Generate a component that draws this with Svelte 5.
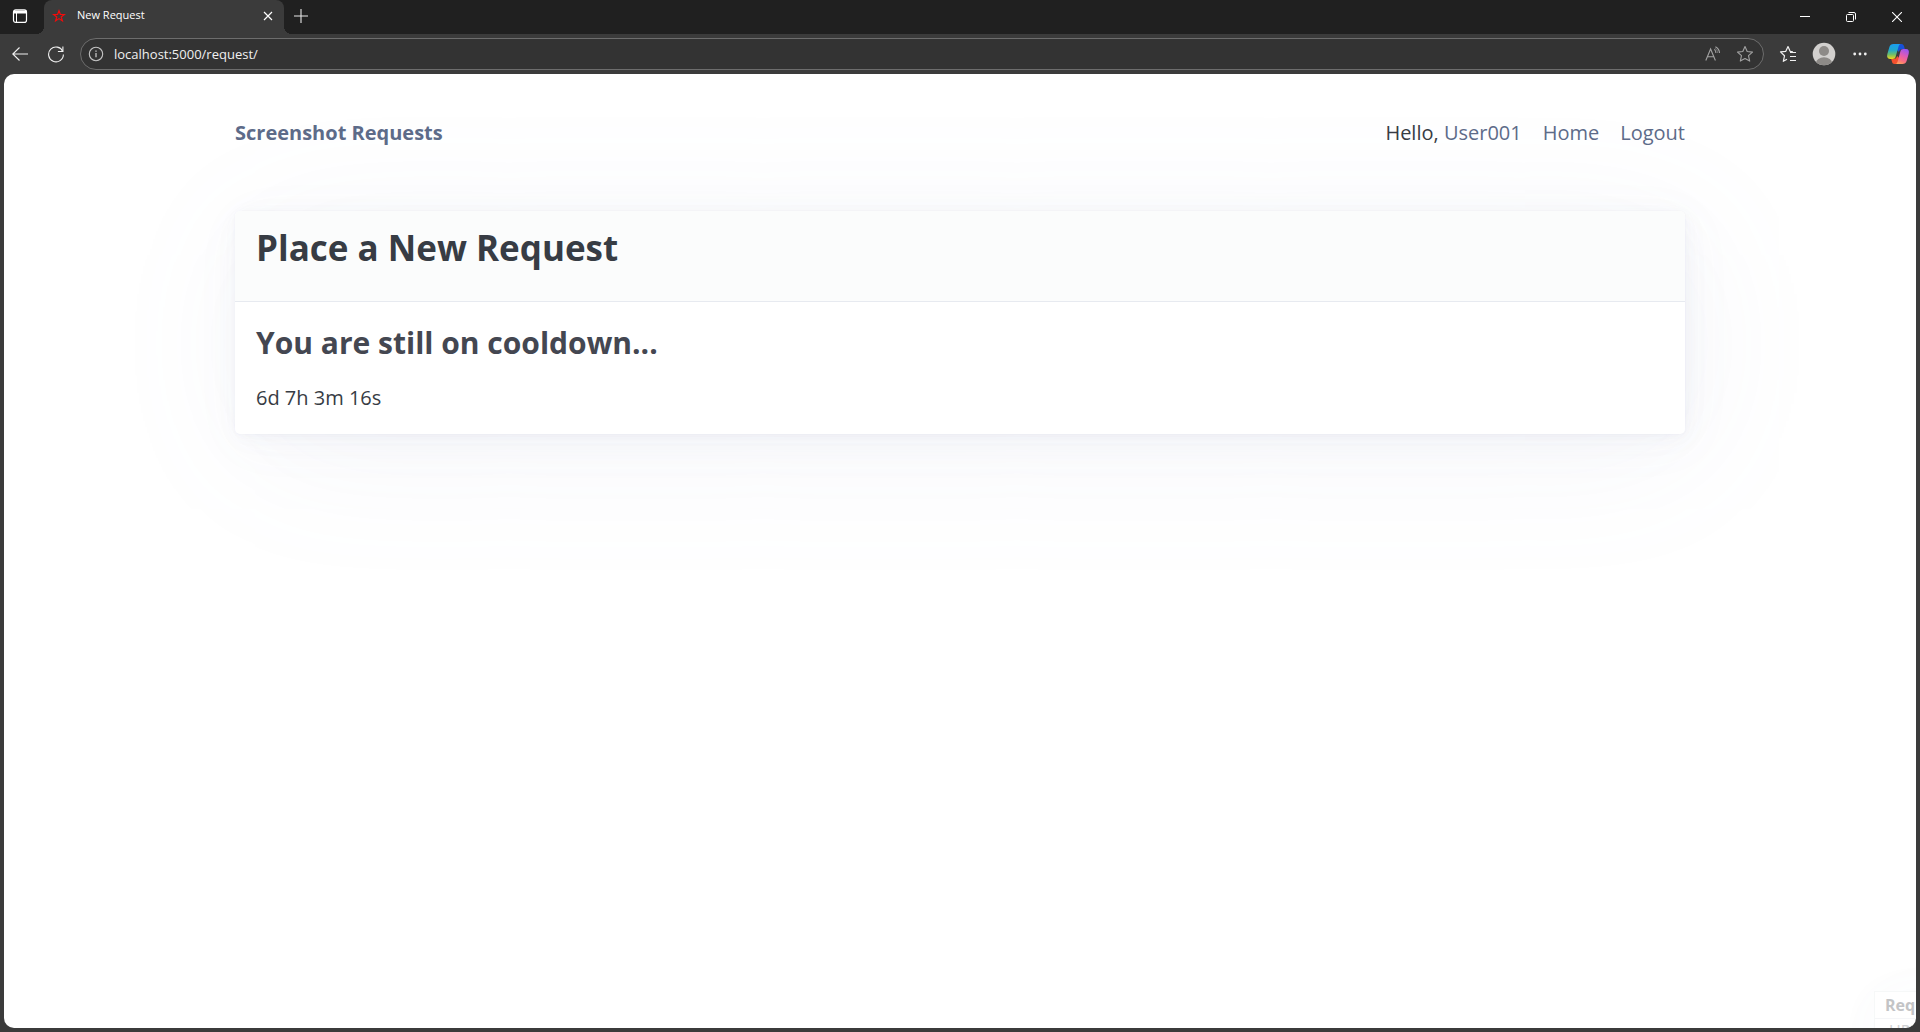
<script>
  let address = $state('localhost:5000/request/');
  const user = 'User001';
  const remaining = '6d 7h 3m 16s';
</script>

<div class="window">
  <header class="tabstrip">
    <button class="workspace" aria-label="Tab actions">
      <svg width="16" height="16" viewBox="0 0 16 16" fill="none" stroke="#fff">
        <rect x="1.5" y="1.8" width="13" height="12.6" rx="2.2" stroke-width="1.2" />
        <path d="M2 3h12v2H2z" fill="#fff" />
        <path d="M4.5 5v9" stroke-width="1" />
      </svg>
    </button>
    <div class="tab">
      <svg class="favicon" width="14" height="14" viewBox="0 0 14 14" fill="none" stroke="#f40b0b" stroke-width="1.2">
        <path d="M7 1.8l1.4 3.7h4L9.2 7.9l1.2 4L7 9.6l-3.4 2.3 1.2-4L1.6 5.500h4z" />
      </svg>
      <span class="tab-title">New Request</span>
      <button aria-label="Close tab">
        <svg width="10" height="10" viewBox="0 0 10 10" stroke="#fff" stroke-width="1.2"><path d="M1 1l8 8M9 1l-8 8" /></svg>
      </button>
    </div>
    <button class="new-tab" aria-label="New tab">
      <svg width="14" height="14" viewBox="0 0 14 14" stroke="#e8e8e8" stroke-width="1.1"><path d="M7 0v14M0 7h14" /></svg>
    </button>
    <div class="controls">
      <button aria-label="Minimize">
        <svg width="10" height="10" viewBox="0 0 10 10" stroke="#fff"><path d="M0 4.500h10" /></svg>
      </button>
      <button aria-label="Restore">
        <svg width="10" height="10" viewBox="0 0 10 10" fill="none" stroke="#fff">
          <rect x=".5" y="2.5" width="7" height="7" rx="1" />
          <path d="M2.500 .5H8a1.500 1.500 0 0 1 1.500 1.500V7.500" />
        </svg>
      </button>
      <button aria-label="Close">
        <svg width="10" height="10" viewBox="0 0 10 10" stroke="#fff" stroke-width="1.1"><path d="M0 0l10 10M10 0L0 10" /></svg>
      </button>
    </div>
  </header>

  <div class="toolbar">
    <button class="back" aria-label="Back">
      <svg width="16" height="14" viewBox="0 0 16 14" fill="none" stroke="#f0f0f0" stroke-width="1.1"><path d="M16 7H.8M7.500 .5L.8 7l6.700 6.500" /></svg>
    </button>
    <button class="reload" aria-label="Refresh">
      <svg width="18" height="18" viewBox="0 0 18 18" fill="none" stroke="#f0f0f0" stroke-width="1.100">
        <path d="M15.800 6.500A7.400 7.400 0 1 0 16.400 9.500" />
        <path d="M15.900 1.500v5h-5" />
      </svg>
    </button>
    <div class="address">
      <svg width="16" height="16" viewBox="0 0 16 16" fill="none" stroke="#c4c4c4" stroke-width="1.1">
        <circle cx="8" cy="8" r="6.700" />
        <path d="M8 7v4.200" stroke-width="1.3" /><path d="M8 4.500v1.300" stroke-width="1.400" />
      </svg>
      <input aria-label="Address" bind:value={address} />
      <button aria-label="Read aloud">
        <svg width="16" height="16" viewBox="0 0 16 16" fill="none" stroke="#a2a2a2" stroke-width="1.1">
          <path d="M.8 14.500L5.600 3l4.800 11.500M2.400 10.700h6.400" />
          <path d="M9.300 3.400c1 .7 1.600 1.900 1.600 3.600M10.400 .8c2.500 1.300 4 3.500 4.100 6.200" />
          <path d="M9.900 2.100c1.700 1 2.700 2.700 2.800 4.900" stroke-opacity=".5" />
        </svg>
      </button>
      <button aria-label="Add to favorites">
        <svg width="18" height="18" viewBox="0 0 18 18" fill="none" stroke="#a2a2a2" stroke-width="1.100" stroke-linejoin="round">
          <path d="M9 1.600l2.200 4.900 5.300.6-4 3.600 1.200 5.400L9 13.500l-4.700 2.600 1.200-5.400-4-3.600 5.300-.6z" />
        </svg>
      </button>
    </div>
    <button class="favorites" aria-label="Favorites">
      <svg width="18" height="18" viewBox="0 0 18 18" fill="none" stroke="#f0f0f0" stroke-width="1.200" stroke-linejoin="round">
        <path d="M13.800 6.600l-2.700-.3L9 1.600 6.800 6.300l-5.300.6 4 3.900-1.200 5.500L8 14.200" />
        <path d="M11 7.500h6M11 11.500h6M11 15.500h6" />
      </svg>
    </button>
    <button class="profile" aria-label="Profile">
      <svg width="24" height="24" viewBox="0 0 24 24">
        <defs><clipPath id="avatar"><circle cx="12" cy="12" r="11.300" /></clipPath></defs>
        <g clip-path="url(#avatar)">
          <path fill="#d2d0ce" d="M0 0h24v24H0z" />
          <circle cx="12" cy="9" r="5" fill="#8d8a87" />
          <ellipse cx="12" cy="21" rx="8" ry="5.800" fill="#8d8a87" />
        </g>
      </svg>
    </button>
    <button class="more" aria-label="Settings and more">
      <svg width="14" height="4" viewBox="0 0 14 4" fill="#f0f0f0"><circle cx="1.700" cy="2" r="1.400" /><circle cx="7" cy="2" r="1.400" /><circle cx="12.300" cy="2" r="1.400" /></svg>
    </button>
    <button class="copilot" aria-label="Copilot">
      <svg width="24" height="24" viewBox="0 0 24 24">
        <defs>
          <linearGradient id="cool" x1="0" y1="0" x2="0" y2="1">
            <stop offset="0" stop-color="#1a9df2" /><stop offset=".4" stop-color="#22a9cc" /><stop offset=".7" stop-color="#6fbf6a" /><stop offset="1" stop-color="#f3d51b" />
          </linearGradient>
          <linearGradient id="warm" x1=".7" y1="0" x2=".3" y2="1">
            <stop offset="0" stop-color="#9a55f2" /><stop offset=".45" stop-color="#e45cae" /><stop offset=".75" stop-color="#fb6e80" /><stop offset="1" stop-color="#fda05a" />
          </linearGradient>
        </defs>
        <path fill="#1750d8" d="M12 2h3.500c1.500 0 2.200 1 2.600 2.300L18.800 7h-2.300c-2 0-3 1-3.600 3L11 8z" />
        <path fill="#f4502e" d="M12 22H8.600c-1.600 0-2.200-1-2.600-2.300L5.200 17h2.400c2 0 3-1 3.500-3l2 2z" />
        <path fill="url(#cool)" d="M7.500 2h7.400c-1.400.2-2 1.300-2.400 2.800L9.700 14.500C9.200 16.300 8.300 17 6.600 17H4C1.500 17 .6 15 1.300 12.300L3.400 5C4 3 5.300 2 7.500 2z" />
        <path fill="url(#warm)" d="M16.500 22H9.300c1.400-.2 2-1.300 2.400-2.800l2.700-9.700C14.900 7.700 15.800 7 17.500 7H20c2.500 0 3.400 2 2.700 4.700L20.600 19c-.6 2-1.900 3-4.100 3z" />
      </svg>
    </button>
  </div>

  <div class="page">
    <div class="container">
      <nav>
        <a class="brand" href="#home">Screenshot Requests</a>
        <ul>
          <li>Hello, <a href="#user">{user}</a></li>
          <li><a href="#home">Home</a></li>
          <li><a href="#logout">Logout</a></li>
        </ul>
      </nav>
      <main>
        <article>
          <header><h1>Place a New Request</h1></header>
          <div class="body">
            <h2>You are still on cooldown...</h2>
            <p>{remaining}</p>
          </div>
        </article>
      </main>
    </div>
    <aside class="ghost">
      <div class="ghost-head">Requests</div>
      <div class="ghost-row">UPLOAD</div>
    </aside>
  </div>
</div>

<style>
  :global(body) { margin: 0; background: #3b3b3b; }
  * { box-sizing: border-box; }
  .window {
    min-height: 100vh;
    display: flex;
    flex-direction: column;
    background: #3b3b3b;
    font-family: "Open Sans", "Noto Sans", sans-serif;
  }
  button {
    display: flex;
    align-items: center;
    justify-content: center;
    flex: none;
    padding: 0;
    border: 0;
    background: none;
  }
  svg { display: block; flex: none; }

  .tabstrip { display: flex; height: 34px; background: #202020; }
  .workspace { width: 40px; padding-bottom: 2px; }
  .tab {
    position: relative;
    display: flex;
    align-items: center;
    width: 240px;
    margin-left: 4px;
    padding: 0 11px 2px 8px;
    border-radius: 8px 8px 0 0;
    background: #3b3b3b;
    color: #fff;
    font-size: 11px;
    line-height: 14px;
  }
  .tab::before, .tab::after {
    content: "";
    position: absolute;
    bottom: 0;
    width: 8px;
    height: 8px;
  }
  .tab::before { left: -8px; background: radial-gradient(circle at 0 0, transparent 8px, #3b3b3b 8px); }
  .tab::after { right: -8px; background: radial-gradient(circle at 100% 0, transparent 8px, #3b3b3b 8px); }
  .tab-title { flex: 1; margin-left: 11px; padding-bottom: 2px; }
  .new-tab { width: 34px; padding-bottom: 3px; }
  .controls { display: flex; margin-left: auto; }
  .controls button { width: 46px; }

  .toolbar { display: flex; align-items: center; height: 40px; padding: 0 10px 0 12px; }
  .back { width: 16px; }
  .reload { width: 18px; margin-left: 19px; }
  .address {
    display: flex;
    align-items: center;
    flex: 1;
    height: 32px;
    margin-left: 15px;
    padding: 0 9px 0 7px;
    border: 1px solid #6d6d6d;
    border-radius: 16px;
    background: #333;
  }
  .address input {
    flex: 1;
    min-width: 0;
    margin-left: 10px;
    padding: 0;
    border: 0;
    outline: 0;
    background: none;
    color: #f0f0f0;
    font: 13px/20px "Open Sans", sans-serif;
  }
  .address button + button { margin-left: 15px; }
  .favorites { margin-left: 15px; }
  .profile { margin-left: 15px; }
  .more { margin-left: 17px; }
  .copilot { margin-left: 19px; }

  .page {
    position: relative;
    flex: 1;
    margin: 0 4px 4px;
    border-radius: 10px;
    background: #fff;
    overflow: hidden;
    color: #373c44;
    font-size: 20px;
    line-height: 30px;
  }
  .container { max-width: 1450px; margin: 0 auto; padding-top: 44px; }
  nav { display: flex; align-items: center; justify-content: space-between; }
  nav ul { display: flex; gap: 21px; margin: 0; padding: 0; list-style: none; }
  a { color: #5d6b89; text-decoration: none; }
  .brand { font-weight: 700; }
  main { padding-top: 63px; }
  article {
    border-radius: 5px;
    background: #fff;
    box-shadow:
      0 1px 4px rgba(129, 145, 181, 0.017),
      1px 1px 8px rgba(129, 145, 181, 0.024),
      1px 3px 16px rgba(129, 145, 181, 0.03),
      2px 5px 28px rgba(129, 145, 181, 0.036),
      4px 9px 53px rgba(129, 145, 181, 0.043),
      11px 21px 150px rgba(129, 145, 181, 0.07),
      0 0 0 1px rgba(129, 145, 181, 0.015);
  }
  article header {
    padding: 14px 21px 30px;
    border-bottom: 1px solid #e7eaf0;
    border-radius: 5px 5px 0 0;
    background: #fbfcfc;
  }
  h1, h2, p { margin: 0; }
  h1 { color: #373c44; font-size: 35px; line-height: 45px; padding-bottom: 1px; }
  h2 { color: #444751; font-size: 30px; line-height: 40px; }
  .body { padding: 21px; }
  .body p { margin-top: 20px; }

  .ghost {
    position: absolute;
    left: calc(100% - 42px);
    top: calc(100% - 37px);
    width: 240px;
    border: 1px solid #f6f8f8;
    box-shadow: 4px 9px 53px rgba(129, 145, 181, 0.04), 11px 21px 80px rgba(129, 145, 181, 0.04);
    font-size: 16px;
    line-height: 26px;
  }
  .ghost-head { padding-left: 10px; border-bottom: 1px solid #f5f6f8; color: #c3c4c6; font-weight: 700; }
  .ghost-row { padding: 0 14px; color: #cfd1d3; line-height: 24px; }
</style>
